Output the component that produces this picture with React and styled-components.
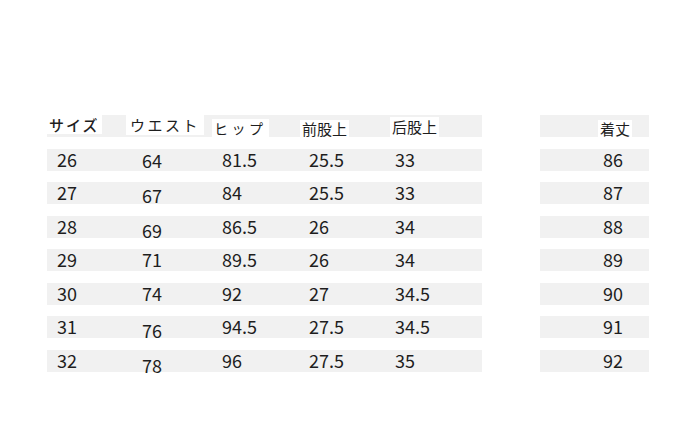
import React from 'react'
import styled, { createGlobalStyle } from 'styled-components'

const GlobalStyle = createGlobalStyle`
    body {
        margin: 0;
        background: #ffffff;
        font-family: "Noto Sans CJK JP", "Noto Sans", sans-serif;
        color: #1e1e1e;
    }
`

const Page = styled.div`
    width: 700px;
    height: 436px;
    padding-top: 115px;
    padding-left: 47px;
    box-sizing: border-box;
    display: flex;
    gap: 58px;
`

const Table = styled.div`
    width: ${props => props.width}px;
    display: flex;
    flex-direction: column;
    gap: 11.5px;
`

const Row = styled.div`
    height: 22px;
    background: #f1f1f1;
    display: grid;
    grid-template-columns: ${props => props.cols};
    align-items: center;
`

const Cell = styled.div`
    padding-left: ${props => props.pad}px;
    font-size: 18px;
    line-height: 22px;
    position: relative;
    top: ${props => (props.drop || 0) - 1}px;
`

const HeadCell = styled.div`
    height: 22px;
    padding-left: ${props => props.pad}px;
    display: flex;
    align-items: flex-start;
`

const Label = styled.span`
    background: #ffffff;
    margin-top: ${props => props.top}px;
    margin-left: ${props => props.shift || 0}px;
    padding: 0 ${props => props.side || 2}px;
    height: ${props => props.h}px;
    font-size: ${props => props.size || 15}px;
    line-height: ${props => props.h}px;
    letter-spacing: ${props => props.spacing || 0}px;
    font-weight: ${props => props.weight || 400};
    white-space: nowrap;
`

const leftCols = '85px 80px 87px 88px 1fr'

const headers = [
    { text: 'サイズ', top: 0, h: 19, shift: 0, spacing: 2, weight: 500 },
    { text: 'ウエスト', top: 0, h: 20, shift: -6, spacing: 2.5, side: 4 },
    { text: 'ヒップ', top: 4, h: 18, shift: 0, spacing: 3.5, size: 14 },
    { text: '前股上', top: 5, h: 17, shift: 1 },
    { text: '后股上', top: 2, h: 20, shift: 3 },
]

const rows = [
    ['26', '64', '81.5', '25.5', '33', '86'],
    ['27', '67', '84', '25.5', '33', '87'],
    ['28', '69', '86.5', '26', '34', '88'],
    ['29', '71', '89.5', '26', '34', '89'],
    ['30', '74', '92', '27', '34.5', '90'],
    ['31', '76', '94.5', '27.5', '34.5', '91'],
    ['32', '78', '96', '27.5', '35', '92'],
]

const drops = [1, 3, 4, 0, 0, 4, 5]

const App = () => {
    return (
        <>
            <GlobalStyle />
            <Page>
                <Table width={435}>
                    <Row cols={leftCols}>
                        {headers.map((h, i) => (
                            <HeadCell key={i} pad={0}>
                                <Label top={h.top} h={h.h} shift={h.shift} spacing={h.spacing} side={h.side} size={h.size} weight={h.weight}>{h.text}</Label>
                            </HeadCell>
                        ))}
                    </Row>
                    {rows.map((r, i) => (
                        <Row key={i} cols={leftCols}>
                            <Cell pad={10}>{r[0]}</Cell>
                            <Cell pad={10} drop={drops[i]}>{r[1]}</Cell>
                            <Cell pad={10}>{r[2]}</Cell>
                            <Cell pad={10}>{r[3]}</Cell>
                            <Cell pad={8}>{r[4]}</Cell>
                        </Row>
                    ))}
                </Table>
                <Table width={109}>
                    <Row cols="1fr">
                        <HeadCell pad={58}>
                            <Label top={5} h={17} side={2}>着丈</Label>
                        </HeadCell>
                    </Row>
                    {rows.map((r, i) => (
                        <Row key={i} cols="1fr">
                            <Cell pad={63}>{r[5]}</Cell>
                        </Row>
                    ))}
                </Table>
            </Page>
        </>
    )
}

export default App
